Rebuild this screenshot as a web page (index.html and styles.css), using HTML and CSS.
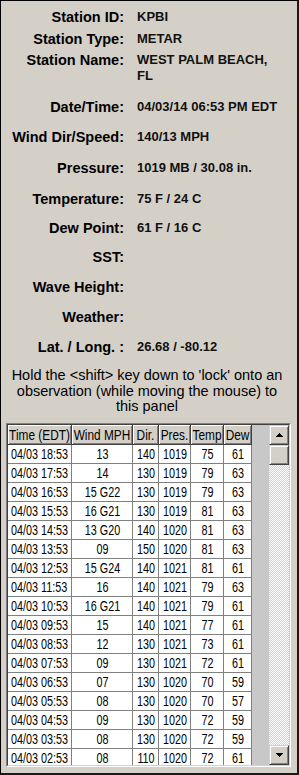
FILE: index.html
```html
<!DOCTYPE html>
<html lang="en">

<head>
    <meta charset="UTF-8">
    <meta name="viewport" content="width=device-width, initial-scale=1.0">
    <title>Station Observation</title>
    <link rel="stylesheet" href="styles.css">
</head>

<body>
    <div class="panel">
        <div class="info">
            <div class="field">
                <div class="lbl">Station ID:</div>
                <div class="val">KPBI</div>
            </div>
            <div class="field tight">
                <div class="lbl">Station Type:</div>
                <div class="val">METAR</div>
            </div>
            <div class="field tight2">
                <div class="lbl">Station Name:</div>
                <div class="val">WEST PALM BEACH, FL</div>
            </div>
            <div class="field wide">
                <div class="lbl">Date/Time:</div>
                <div class="val">04/03/14 06:53 PM EDT</div>
            </div>
            <div class="field">
                <div class="lbl">Wind Dir/Speed:</div>
                <div class="val">140/13 MPH</div>
            </div>
            <div class="field wide">
                <div class="lbl">Pressure:</div>
                <div class="val">1019 MB / 30.08 in.</div>
            </div>
            <div class="field wide">
                <div class="lbl">Temperature:</div>
                <div class="val">75 F / 24 C</div>
            </div>
            <div class="field near">
                <div class="lbl">Dew Point:</div>
                <div class="val">61 F / 16 C</div>
            </div>
            <div class="field near">
                <div class="lbl">SST:</div>
                <div class="val"></div>
            </div>
            <div class="field">
                <div class="lbl">Wave Height:</div>
                <div class="val"></div>
            </div>
            <div class="field">
                <div class="lbl">Weather:</div>
                <div class="val"></div>
            </div>
            <div class="field">
                <div class="lbl">Lat. / Long. :</div>
                <div class="val">26.68 / -80.12</div>
            </div>
        </div>

        <p class="hint">Hold the &lt;shift&gt; key down to 'lock' onto an<br>observation (while moving the mouse) to<br>this panel</p>

        <div class="obs">
            <div class="obs-in">
                <div class="list">
                    <div class="hdr">
                        <span class="c-time"><em>Time (EDT)</em></span><span><em>Wind MPH</em></span><span><em>Dir.</em></span><span><em>Pres.</em></span><span><em>Temp</em></span><span><em>Dew</em></span>
                    </div>
                    <div class="row"><span class="c-time">04/03 18:53</span><span>13</span><span>140</span><span>1019</span><span>75</span><span>61</span></div>
                    <div class="row"><span class="c-time">04/03 17:53</span><span>14</span><span>130</span><span>1019</span><span>79</span><span>63</span></div>
                    <div class="row"><span class="c-time">04/03 16:53</span><span>15 G22</span><span>130</span><span>1019</span><span>79</span><span>63</span></div>
                    <div class="row"><span class="c-time">04/03 15:53</span><span>16 G21</span><span>130</span><span>1019</span><span>81</span><span>63</span></div>
                    <div class="row"><span class="c-time">04/03 14:53</span><span>13 G20</span><span>140</span><span>1020</span><span>81</span><span>63</span></div>
                    <div class="row"><span class="c-time">04/03 13:53</span><span>09</span><span>150</span><span>1020</span><span>81</span><span>63</span></div>
                    <div class="row"><span class="c-time">04/03 12:53</span><span>15 G24</span><span>140</span><span>1021</span><span>81</span><span>61</span></div>
                    <div class="row"><span class="c-time">04/03 11:53</span><span>16</span><span>140</span><span>1021</span><span>79</span><span>63</span></div>
                    <div class="row"><span class="c-time">04/03 10:53</span><span>16 G21</span><span>140</span><span>1021</span><span>79</span><span>61</span></div>
                    <div class="row"><span class="c-time">04/03 09:53</span><span>15</span><span>140</span><span>1021</span><span>77</span><span>61</span></div>
                    <div class="row"><span class="c-time">04/03 08:53</span><span>12</span><span>130</span><span>1021</span><span>73</span><span>61</span></div>
                    <div class="row"><span class="c-time">04/03 07:53</span><span>09</span><span>130</span><span>1021</span><span>72</span><span>61</span></div>
                    <div class="row"><span class="c-time">04/03 06:53</span><span>07</span><span>130</span><span>1020</span><span>70</span><span>59</span></div>
                    <div class="row"><span class="c-time">04/03 05:53</span><span>08</span><span>130</span><span>1020</span><span>70</span><span>57</span></div>
                    <div class="row"><span class="c-time">04/03 04:53</span><span>09</span><span>130</span><span>1020</span><span>72</span><span>59</span></div>
                    <div class="row"><span class="c-time">04/03 03:53</span><span>08</span><span>130</span><span>1020</span><span>72</span><span>59</span></div>
                    <div class="row"><span class="c-time">04/03 02:53</span><span>08</span><span>110</span><span>1020</span><span>72</span><span>61</span></div>
                </div>
                <div class="scroll">
                    <div class="btn">
                        <svg width="7" height="4" viewBox="0 0 7 4" shape-rendering="crispEdges"><path d="M3 0h1v1h1v1h1v1h1v1H0V3h1V2h1V1h1z" fill="#000"/></svg>
                    </div>
                    <div class="btn thumb"></div>
                    <div class="track"></div>
                    <div class="btn">
                        <svg width="7" height="4" viewBox="0 0 7 4" shape-rendering="crispEdges"><path d="M0 0h7v1H6v1H5v1H4v1H3V3H2V2H1V1H0z" fill="#000"/></svg>
                    </div>
                </div>
            </div>
        </div>
    </div>
</body>

</html>
```

FILE: styles.css
```css
* {
    margin: 0;
    padding: 0;
    box-sizing: border-box;
}

body {
    font-family: "Liberation Sans", Arial, sans-serif;
    color: #000;
    background-color: #d4d0c8;
}

.panel {
    width: 299px;
    height: 775px;
    background-color: #d4d0c8;
    border: 1px solid #000;
    border-right: 2px solid #1a1a1a;
    border-bottom: 2px solid #1a1a1a;
    overflow: hidden;
}

/* station info */
.info {
    padding-top: 8px;
}

.field {
    display: grid;
    grid-template-columns: 123px 145px;
    column-gap: 13px;
    margin-top: 14px;
    line-height: 16px;
}

.field:first-child {
    margin-top: 0;
}

.field.tight {
    margin-top: 6px;
}

.field.tight2 {
    margin-top: 5px;
}

.field.wide {
    margin-top: 15px;
}

.field.near {
    margin-top: 13px;
}

.lbl {
    font-size: 14.5px;
    font-weight: bold;
    text-align: right;
    white-space: nowrap;
}

.val {
    font-size: 13px;
    font-weight: bold;
    color: #111;
}

.hint {
    margin-top: 13px;
    font-size: 14.5px;
    line-height: 15.5px;
    text-align: center;
    padding-right: 4px;
}

/* observation list */
.obs {
    margin: 8px 6px 0 5px;
    height: 344px;
    border: 1px solid;
    border-color: #808080 #fff #fff #808080;
}

.obs-in {
    height: 100%;
    border: 1px solid;
    border-color: #404040 #d4d0c8 #d4d0c8 #404040;
    display: flex;
    overflow: hidden;
}

.list {
    width: 261px;
    background-color: #c8c8c8;
    font-size: 15px;
    overflow: hidden;
}

.hdr,
.row {
    display: grid;
    grid-template-columns: 64px 61px 26px 32px 33px 28px;
    width: 244px;
}

/* column rules are drawn on the row so the text can be squeezed */
.row {
    height: 19px;
    border-bottom: 1px solid #808080;
    background: linear-gradient(to right,
            #fff 63px, #808080 63px 64px,
            #fff 64px 124px, #808080 124px 125px,
            #fff 125px 150px, #808080 150px 151px,
            #fff 151px 182px, #808080 182px 183px,
            #fff 183px 215px, #808080 215px 216px,
            #fff 216px 243px, #808080 243px);
}

.row span {
    display: block;
    margin: 0 -12px;
    line-height: 18px;
    text-align: center;
    white-space: nowrap;
    transform: scaleX(0.72);
}

.row span.c-time {
    margin: 0 -30px 0 3px;
    text-align: left;
    transform-origin: left center;
}

.hdr span {
    height: 20px;
    overflow: hidden;
    background-color: #d4d0c8;
    border-right: 1px solid #404040;
    border-bottom: 1px solid #404040;
    box-shadow: inset 1px 1px #fff, inset -1px -1px #808080;
}

.hdr em {
    display: block;
    margin: 0 -12px;
    font-style: normal;
    line-height: 19px;
    text-align: center;
    white-space: nowrap;
    transform: scaleX(0.79);
}

/* scrollbar */
.scroll {
    width: 20px;
    display: flex;
    flex-direction: column;
}

.btn {
    height: 20px;
    flex: none;
    background-color: #d4d0c8;
    border: 1px solid;
    border-color: #d4d0c8 #404040 #404040 #d4d0c8;
    box-shadow: inset 1px 1px #fff, inset -1px -1px #808080;
    display: flex;
    align-items: center;
    justify-content: center;
}

.btn svg {
    display: block;
}

.track {
    flex: 1;
    background: repeating-conic-gradient(#d4d0c8 0 25%, #fff 0 50%) 0 0 / 2px 2px;
}
```
